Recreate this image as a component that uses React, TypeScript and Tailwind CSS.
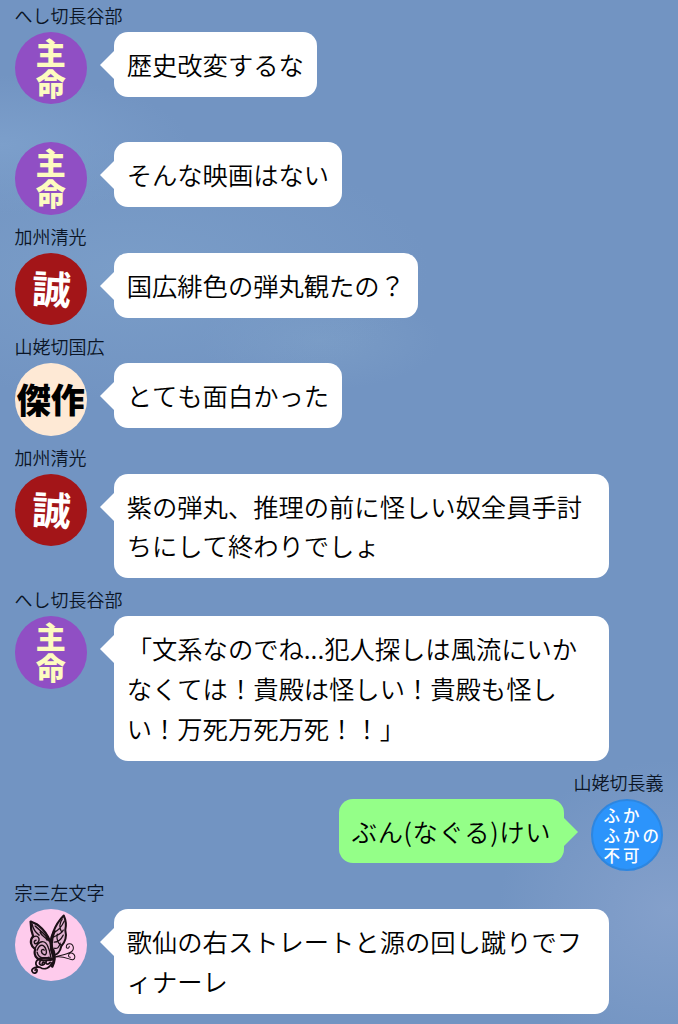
import React from 'react';
import { clsx } from 'clsx';

type AvatarKind = 'shumei' | 'makoto' | 'kessaku' | 'fuka' | 'butterfly';

interface Message {
    id: number;
    name?: string;
    avatar: AvatarKind;
    lines: string[];
    own?: boolean;
}

const MESSAGES: Message[] = [
    { id: 1, name: 'へし切長谷部', avatar: 'shumei', lines: ['歴史改変するな'] },
    { id: 2, avatar: 'shumei', lines: ['そんな映画はない'] },
    { id: 3, name: '加州清光', avatar: 'makoto', lines: ['国広緋色の弾丸観たの？'] },
    { id: 4, name: '山姥切国広', avatar: 'kessaku', lines: ['とても面白かった'] },
    { id: 5, name: '加州清光', avatar: 'makoto', lines: ['紫の弾丸、推理の前に怪しい奴全員手討', 'ちにして終わりでしょ'] },
    {
        id: 6,
        name: 'へし切長谷部',
        avatar: 'shumei',
        lines: ['「文系なのでね...犯人探しは風流にいか', 'なくては！貴殿は怪しい！貴殿も怪し', 'い！万死万死万死！！」'],
    },
    { id: 7, name: '山姥切長義', avatar: 'fuka', lines: ['ぶん(なぐる)けい'], own: true },
    { id: 8, name: '宗三左文字', avatar: 'butterfly', lines: ['歌仙の右ストレートと源の回し蹴りでフ', 'ィナーレ'] },
];

const Butterfly: React.FC = () => (
    <svg viewBox="0 0 72 72" className="h-full w-full" fill="none" stroke="#1b1016" strokeLinecap="round" strokeLinejoin="round">
        {/* far wing */}
        <path d="M38 46 C34 38 35 29 38 23 C41 15 45 10 48.5 6.5 C51 12 51 17 50 21 C52 29 49 34 46 37 C45 42 42 46 38 46Z" fill="#1b1016" fillOpacity="0.12" strokeWidth="2" />
        <path d="M38 24 C42 22 46 19 49 12 M38 28 C42 26 46 25 48 21 M39 33 C43 33 46 30 48 26 M39 39 C42 40 44 38 45 34 M47 10 C44 14 44 19 46 22 M42 25 C41 30 43 35 46 36" strokeWidth="1.2" />
        <path d="M38 46 C35 38 36 30 39 22" strokeWidth="2.8" />
        {/* near wing */}
        <path d="M38 50 C39 38 33 24 24 17 C21 14 18 14 15.5 12.5 C15.5 18 16 22 18 27 C14 32 16 37 20 40 C18 47 23 52 30 51 C34 51 36 51 38 50Z" fill="#1b1016" fillOpacity="0.15" strokeWidth="2.2" />
        <path d="M17 15 C18 20 20 23 24 26 M20 17 C24 21 30 24 34 32 M18 28 C23 25 26 30 22 34 C19 36 18 32 21 31 M20 39 C24 31 30 30 33 38 C35 42 35 46 36 49 M22 41 C25 34 29 35 31 41 C32 45 30 47 27 44 C25 41 28 39 29 41 M22 43 C23 49 29 50 34 48 M25 23 C27 28 30 27 32 31" strokeWidth="1.4" />
        {/* lower wing and tail */}
        <path d="M38 50 C32 48 25 48 22 51 C19 55 22 58 25 58 C29 61 35 59 37 53 M25 52 C23 55 26 57 29 55 C30 53 28 52 27 54 M31 52 C30 55 33 56 35 53 M25 58 C19 57 16 60 17 62 C18 65 22 64 22 61 C22 59 20 60 20 61" strokeWidth="1.7" />
        <path d="M38 41 C40 47 39 53 37 57" strokeWidth="2.8" />
        {/* antennae */}
        <path d="M39 48 C47 45 59 45 58 38 C57 33 51 34 51 38 C52 40 54 39 54 37 M39 48 C45 46 52 49 55 50 C60 52 61 46 57 44 C53 43 52 48 55 48" strokeWidth="1" />
    </svg>
);

const Avatar: React.FC<{ kind: AvatarKind }> = ({ kind }) => {
    const base = 'h-[72.4px] w-[72.4px] shrink-0 rounded-full';

    if (kind === 'shumei') {
        return (
            <div className={clsx(base, 'flex flex-col items-center bg-[#904fc4] pt-[4px] text-[30px] leading-[30.5px] font-black text-[#fdfbc0]')}>
                <span>主</span>
                <span>命</span>
            </div>
        );
    }
    if (kind === 'makoto') {
        return (
            <div className={clsx(base, 'flex items-center justify-center bg-[#a31518] text-[39px] leading-none font-bold text-white')}>
                <span className="-mt-0.5 ml-0.5 -skew-x-3 skew-y-3">誠</span>
            </div>
        );
    }
    if (kind === 'kessaku') {
        return (
            <div className={clsx(base, 'flex items-center justify-center bg-[#fee9d5] text-[34px] leading-none font-black whitespace-nowrap text-black')}>
                傑作
            </div>
        );
    }
    if (kind === 'fuka') {
        return (
            <div className={clsx(base, 'flex flex-col border-2 border-[#2d86e0] bg-[#2c94fb] pt-[4px] pl-[10.5px] text-[16.5px] leading-[20px] font-medium tracking-[3px] whitespace-nowrap text-white')}>
                <span>ふか</span>
                <span>ふかの</span>
                <span>不可</span>
            </div>
        );
    }
    return (
        <div className={clsx(base, 'bg-[#fecbec]')}>
            <Butterfly />
        </div>
    );
};

const Bubble: React.FC<{ lines: string[]; own?: boolean }> = ({ lines, own }) => (
    <div className={clsx('flex items-start', own && 'flex-row-reverse')}>
        <svg viewBox="0 0 15 30" className={clsx('mt-[18px] h-[30px] w-[15px] shrink-0', own ? '-ml-px -scale-x-100 text-[#94ff88]' : '-mr-px text-white')}>
            <path d="M15 0 L15 30 L0 15 Z" fill="currentColor" />
        </svg>
        <div
            className={clsx(
                'rounded-[14px] px-[12.8px] pt-[13px] pb-3 text-[25.3px] leading-[39.8px] font-[350] whitespace-nowrap text-black [font-kerning:none]',
                own ? 'w-[225px] bg-[#94ff88] tracking-[0.6px]' : 'bg-white',
                lines.length > 1 && 'w-[495px]'
            )}
        >
            {lines.map(line => (
                <p key={line}>{line}</p>
            ))}
        </div>
    </div>
);

const MessageRow: React.FC<{ message: Message }> = ({ message }) => (
    <div>
        <div className={clsx('h-[38px] pt-[5px] text-[18px] leading-8 font-[350] text-[#0b1526] [font-kerning:none]', message.own && 'text-right')}>
            {message.name}
        </div>
        <div className={clsx('flex items-start gap-[13px]', message.own && 'flex-row-reverse')}>
            <Avatar kind={message.avatar} />
            <Bubble lines={message.lines} own={message.own} />
        </div>
    </div>
);

export default function App() {
    return (
        <div
            lang="ja"
            className="h-screen overflow-hidden bg-[#7294c2] bg-[radial-gradient(ellipse_190px_70px_at_0px_145px,#7c9fcb_0%,transparent_100%),radial-gradient(ellipse_300px_130px_at_130px_270px,#7a9dc8_0%,transparent_100%),radial-gradient(ellipse_120px_50px_at_320px_340px,#7a9cc6_0%,transparent_100%),radial-gradient(ellipse_170px_150px_at_668px_910px,#84a0cb_0%,transparent_100%)] font-['Noto_Sans_CJK_JP',sans-serif]"
        >
            <div className="-mt-1.5 pr-[14.6px] pl-[14.5px]">
                {MESSAGES.map(message => (
                    <MessageRow key={message.id} message={message} />
                ))}
            </div>
        </div>
    );
}
